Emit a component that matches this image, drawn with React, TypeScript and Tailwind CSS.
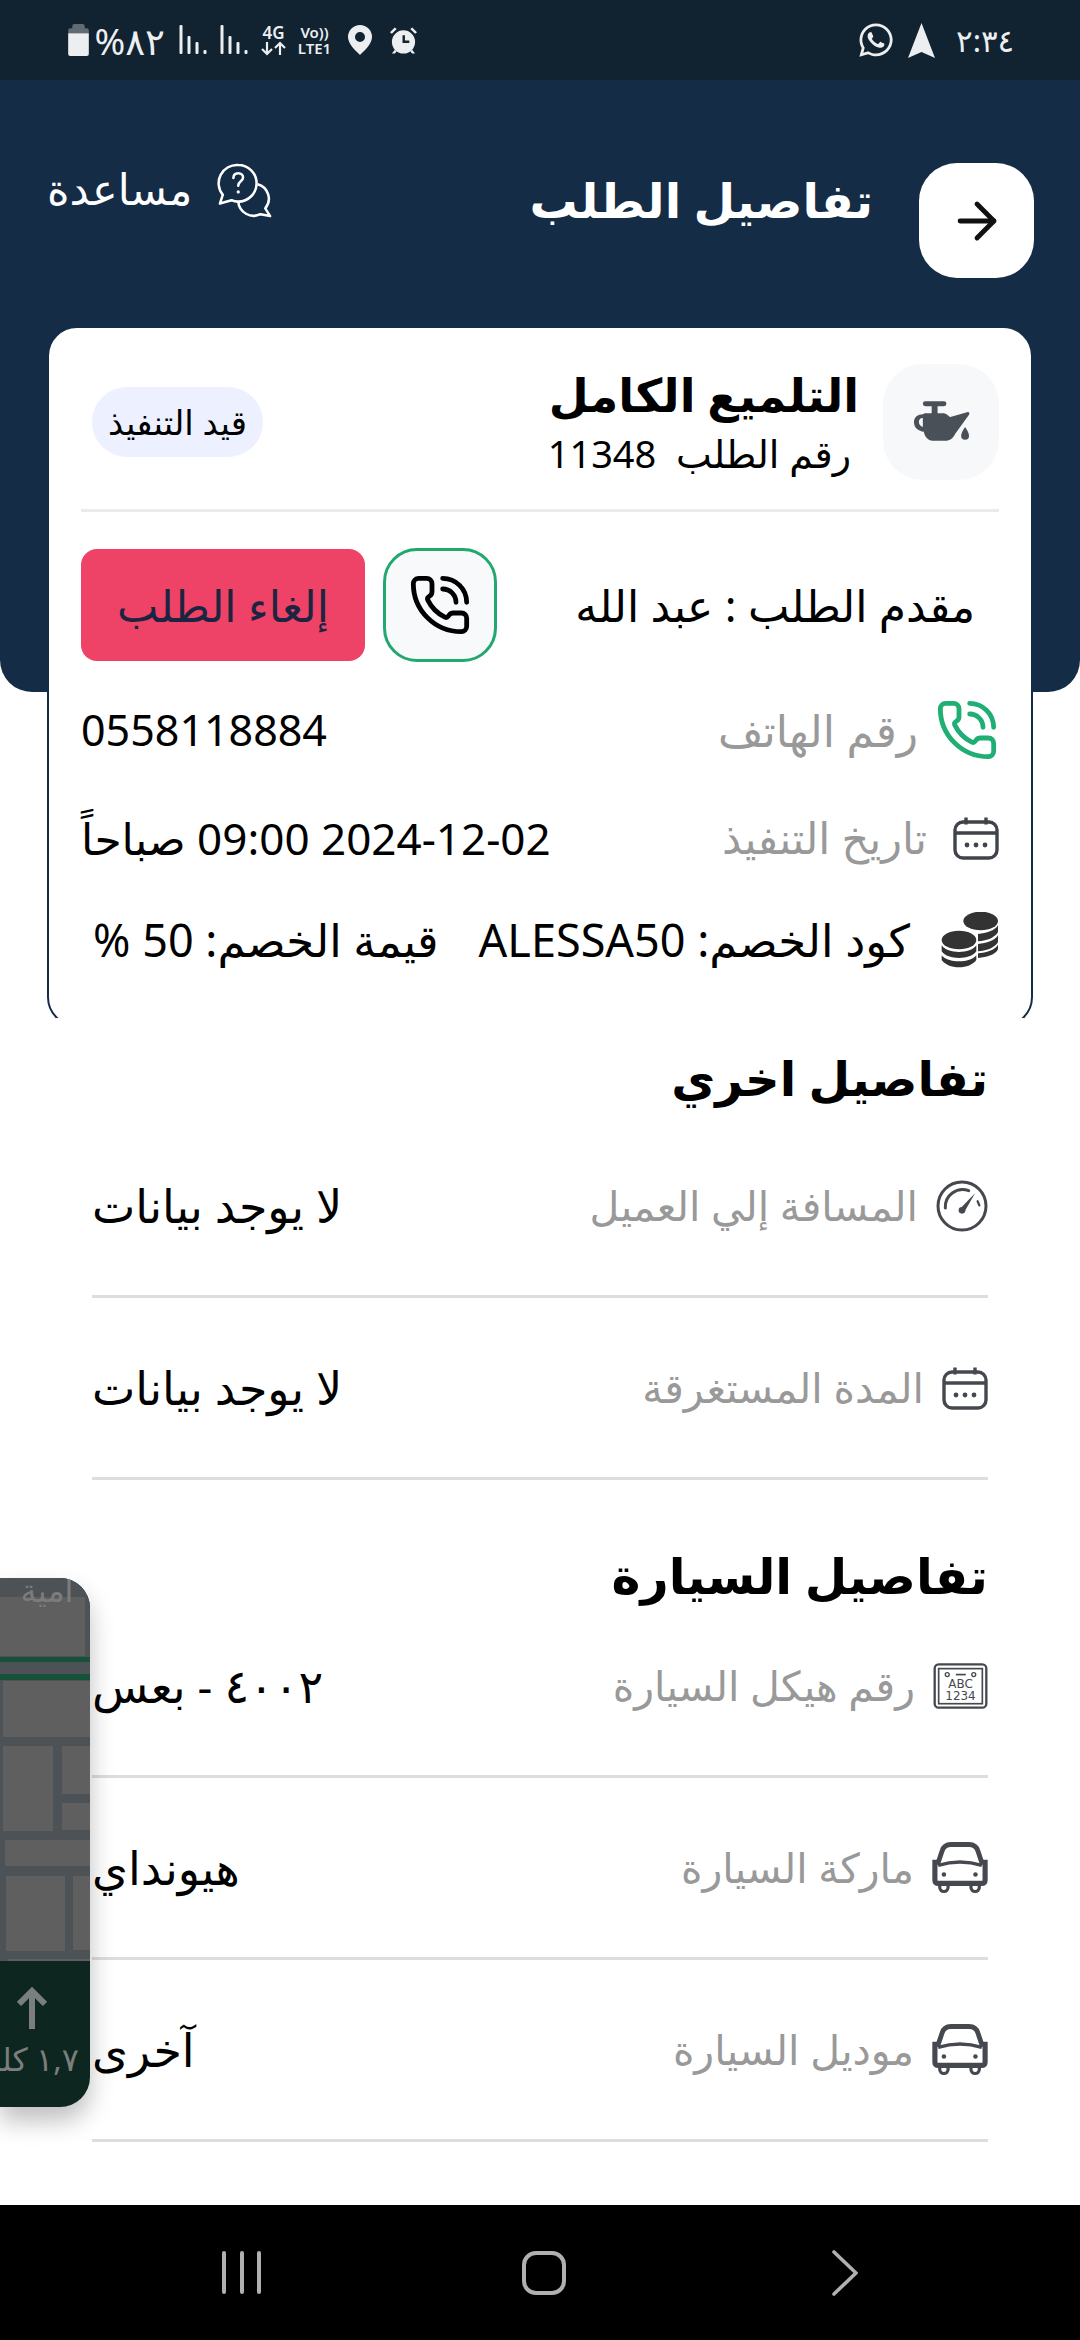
import { ArrowRight, PhoneCall } from "lucide-react";
import { FaWhatsapp } from "react-icons/fa";

function CalendarIcon({ className }: { className?: string }) {
  return (
    <svg viewBox="0 0 46 44" className={className} fill="none" stroke="currentColor" strokeWidth="3.4">
      <rect x="2" y="6" width="42" height="36" rx="8" />
      <path d="M2 17h42M13 1.5v7M33 1.5v7" />
      <circle cx="14" cy="29" r="2.4" fill="currentColor" stroke="none" />
      <circle cx="23" cy="29" r="2.4" fill="currentColor" stroke="none" />
      <circle cx="32" cy="29" r="2.4" fill="currentColor" stroke="none" />
    </svg>
  );
}

function CoinsIcon({ className }: { className?: string }) {
  return (
    <svg viewBox="38 38 170 168" className={className} fill="currentColor">
      <ellipse cx="155" cy="65" rx="52" ry="28" />
      <path d="M147 104c26-2 50-10 60-26v20c-8 16-32 26-60 28z" />
      <path d="M147 134c26-2 50-10 60-26v20c-8 16-32 26-60 28z" />
      <path d="M147 162c26-2 50-10 60-26v14c-8 16-32 24-60 26z" />
      <ellipse cx="90" cy="122" rx="52" ry="28" />
      <path d="M38 138c10 14 30 20 52 20s42-6 52-20v18c-10 14-30 20-52 20s-42-6-52-20z" />
      <path d="M38 168c10 12 30 18 52 18s42-6 52-18v14c-10 14-30 22-52 22s-42-8-52-22z" />
    </svg>
  );
}

function GaugeIcon({ className }: { className?: string }) {
  return (
    <svg viewBox="40 36 156 156" className={className} fill="none" stroke="currentColor" strokeWidth="9">
      <circle cx="118" cy="114" r="72" />
      <path d="M68 120a52 52 0 0 1 70-52" strokeLinecap="round" />
      <path d="M112 122l45-46-32 56z" fill="currentColor" stroke="none" />
      <circle cx="118" cy="127" r="10" fill="currentColor" stroke="none" />
      <path d="M165 100l5 12" strokeWidth="7" strokeLinecap="round" />
    </svg>
  );
}

function PlateIcon({ className }: { className?: string }) {
  return (
    <svg viewBox="36 43 164 139" className={className} fill="none" stroke="currentColor">
      <rect x="40" y="47" width="156" height="131" rx="12" strokeWidth="7" />
      <rect x="52" y="60" width="132" height="106" strokeWidth="5" />
      <circle cx="78" cy="78" r="6" strokeWidth="4" />
      <circle cx="158" cy="78" r="6" strokeWidth="4" />
      <path d="M104 78h30" strokeWidth="5" />
      <text x="118" y="118" textAnchor="middle" fontSize="36" fill="currentColor" stroke="none" fontFamily="DejaVu Sans">ABC</text>
      <text x="118" y="154" textAnchor="middle" fontSize="36" fill="currentColor" stroke="none" fontFamily="DejaVu Sans">1234</text>
    </svg>
  );
}

function CarIcon({ className }: { className?: string }) {
  return (
    <svg viewBox="33 38 174 160" className={className} fill="none" stroke="currentColor" strokeWidth="15" strokeLinejoin="round">
      <path d="M50 108l14-42c4-14 14-21 28-21h56c14 0 24 7 28 21l14 42" />
      <path d="M52 110c44-14 92-14 136 0" strokeWidth="11" />
      <path d="M42 92v64c0 6 4 10 10 10h136c6 0 10-4 10-10V92" strokeWidth="16" />
      <circle cx="70" cy="138" r="7" fill="currentColor" stroke="none" />
      <circle cx="168" cy="138" r="7" fill="currentColor" stroke="none" />
      <path d="M57 168v10a13 13 0 0 0 26 0v-10M154 168v10a13 13 0 0 0 26 0v-10" strokeWidth="10" />
    </svg>
  );
}

function OilCanIcon({ className }: { className?: string }) {
  return (
    <svg viewBox="0 0 58 42" className={className} fill="currentColor">
      <rect x="10" y="0" width="24" height="5" rx="2.5" />
      <rect x="19" y="4" width="6" height="9" />
      <path d="M12 12h18c4 0 5 2 8 4l17-5c2-.5 3 1 2 2.500L43 33c-2 4-5 7-9 7H20c-5 0-8-4-9-9-5-1-10-3-10-10 0-5 4-8 9-8zm-2 5c-3 0-4 2-4 4 0 3 2 4 4 5z" fillRule="evenodd" />
      <path d="M53 26c2 3 4 6 4 9a4 4 0 0 1-8 0c0-3 2-6 4-9z" />
    </svg>
  );
}

function HelpChatIcon({ className }: { className?: string }) {
  return (
    <svg viewBox="0 0 56 58" className={className} fill="none" stroke="currentColor" strokeWidth="2.6" strokeLinejoin="round">
      <path d="M21 2a19 19 0 0 1 0 38c-3 0-5-.5-7-1.500L2 42l3-9A19 19 0 0 1 21 2z" />
      <path d="M41 22a15.500 15.500 0 0 1 8 25l5 8-10-2a16 16 0 0 1-23-13" />
      <path d="M16 15.500c0-3 2-5 5-5s5 2 5 4.500c0 4-5 4-5 8.500" strokeLinecap="round" />
      <circle cx="21" cy="30" r="1.700" fill="currentColor" stroke="none" />
    </svg>
  );
}

function SignalIcon() {
  return (
    <svg viewBox="0 0 27 30" className="h-[30px] w-[28px]" fill="#eceef0">
      <rect x="0" y="0" width="3" height="29" rx="1" />
      <rect x="8" y="11" width="3" height="18" rx="1" />
      <rect x="16" y="17" width="3" height="12" rx="1" />
      <rect x="24" y="25" width="3" height="4" rx="1" />
    </svg>
  );
}

function StatusBar() {
  return (
    <div dir="ltr" className="flex h-[80px] shrink-0 items-center justify-between bg-[#112230] pl-[68px] pr-[69px] text-[#eceef0]">
      <div className="flex items-center">
        <svg viewBox="0 0 20 31" className="h-[32px] w-[21px]">
          <path d="M6 0h8a2 2 0 0 1 2 2v2h2a2 2 0 0 1 2 2v3H0V6a2 2 0 0 1 2-2h2V2a2 2 0 0 1 2-2z" fill="#5f6b75" />
          <path d="M0 9h20v20a2 2 0 0 1-2 2H2a2 2 0 0 1-2-2z" fill="#eceef0" />
        </svg>
        <span dir="rtl" className="ml-[7px] w-[69px] whitespace-nowrap text-[37px] leading-none">٨٢%</span>
        <div className="ml-[14px]"><SignalIcon /></div>
        <div className="ml-[13px]"><SignalIcon /></div>
        <div className="ml-[13px] flex w-[25px] flex-col items-center">
          <span className="text-[17px] font-semibold leading-[17px]">4G</span>
          <svg viewBox="0 0 25 15" className="h-[15px] w-[25px]" fill="none" stroke="currentColor" strokeWidth="2.2">
            <path d="M6 1v12M1 8l5 5 5-5M19 14V2M14 7l5-5 5 5" />
          </svg>
        </div>
        <div className="ml-[9px] flex w-[39px] flex-col items-center text-[15px] font-semibold leading-[16px]">
          <span>Vo))</span>
          <span>LTE1</span>
        </div>
        <svg viewBox="0 0 24 30" className="ml-[14px] h-[30px] w-[24px]" fill="#eceef0">
          <path d="M12 0a12 12 0 0 1 12 12c0 7-8 14-12 18C8 26 0 19 0 12A12 12 0 0 1 12 0zm0 7a5 5 0 1 0 0 10 5 5 0 0 0 0-10z" fillRule="evenodd" />
        </svg>
        <svg viewBox="0 0 30 30" className="ml-[17px] h-[30px] w-[29px]" fill="#eceef0">
          <path d="M15 5a12 12 0 1 1 0 24 12 12 0 0 1 0-24zm-1 5v8h7v-2.500h-4.500V10z" fillRule="evenodd" />
          <path d="M1 7l5-5 2 1.500-5 5zM29 7l-5-5-2 1.500 5 5zM6 25l-3 4h3l2-2zM24 25l3 4h-3l-2-2z" />
        </svg>
      </div>
      <div className="flex items-center">
        <FaWhatsapp className="h-[38px] w-[38px]" />
        <svg viewBox="0 0 27 35" className="ml-[13px] h-[35px] w-[27px]" fill="#eceef0">
          <path d="M13.500 0L27 35l-13.500-6L0 35z" />
        </svg>
        <span className="ml-[21px] w-[55px] whitespace-nowrap text-[31px] leading-none">٢:٣٤</span>
      </div>
    </div>
  );
}

function Header() {
  return (
    <div className="flex h-[612px] shrink-0 items-start justify-between rounded-b-[32px] bg-[#152c47] pl-[47px] pr-[46px] pt-[83px]">
      <div className="flex items-start">
        <button className="flex h-[115px] w-[115px] items-center justify-center rounded-[38px] bg-white text-[#111]">
          <ArrowRight className="h-[58px] w-[58px]" strokeWidth={2} />
        </button>
        <h1 className="mr-[46px] mt-[8px] text-[48px] font-bold leading-[58px] text-white">تفاصيل الطلب</h1>
      </div>
      <div className="flex items-center gap-[25px] text-white">
        <HelpChatIcon className="h-[56px] w-[56px]" />
        <span className="mb-[4px] text-[43px] leading-[52px]">مساعدة</span>
      </div>
    </div>
  );
}

function OrderCard() {
  return (
    <div className="relative z-10 mx-[47px] -mt-[366px] h-[692px] shrink-0 overflow-hidden">
      <div className="h-[701px] rounded-[30px] border-2 border-[#152c47] bg-white px-[32px] pt-[36px]">
        <div className="flex h-[116px] items-center justify-between">
          <div className="flex items-center">
            <div className="flex h-[116px] w-[116px] items-center justify-center rounded-[40px] bg-[#f7f8fa] text-[#4a5058]">
              <OilCanIcon className="h-[42px] w-[57px]" />
            </div>
            <div className="mr-[24px] mt-[6px]">
              <div className="text-[46px] font-bold leading-[56px] text-black">التلميع الكامل</div>
              <div className="mr-[8px] text-[38px] leading-[62px] text-black">رقم الطلب&nbsp; 11348</div>
            </div>
          </div>
          <span className="ml-[11px] flex h-[70px] w-[171px] items-center justify-center whitespace-nowrap rounded-full bg-[#edf0fe] text-[34px] text-black">قيد التنفيذ</span>
        </div>
        <div className="mt-[29px] h-[3px] bg-[#ebebeb]" />
        <div className="mt-[36px] flex items-center justify-between">
          <span className="mr-[24px] text-[44px] text-black">مقدم الطلب : عبد الله</span>
          <div className="flex items-center gap-[18px]">
            <button className="flex h-[114px] w-[114px] items-center justify-center rounded-[34px] border-[3px] border-[#22a86f] bg-[#f7f9fb] text-black">
              <PhoneCall className="h-[64px] w-[64px]" strokeWidth={1.8} />
            </button>
            <button className="flex h-[112px] w-[284px] items-center justify-center rounded-[16px] bg-[#ee4266] text-[44px] text-[#1b2440]">إلغاء الطلب</button>
          </div>
        </div>
        <div className="mt-[37px] flex h-[62px] items-center justify-between">
          <div className="flex items-center gap-[17px]">
            <PhoneCall className="h-[64px] w-[64px] text-[#1fae73]" strokeWidth={1.8} />
            <span className="text-[44px] text-[#999999]">رقم الهاتف</span>
          </div>
          <span className="text-[43px] text-black">0558118884</span>
        </div>
        <div className="mt-[46px] flex h-[62px] items-center justify-between">
          <div className="flex items-center gap-[26px]">
            <CalendarIcon className="h-[44px] w-[46px] text-[#3f444b]" />
            <span className="text-[43px] text-[#999999]">تاريخ التنفيذ</span>
          </div>
          <span className="whitespace-nowrap text-[44px] text-black">2024-12-02 09:00 صباحاً</span>
        </div>
        <div className="mt-[40px] flex h-[62px] items-center">
          <CoinsIcon className="h-[56px] w-[58px] text-[#333333]" />
          <span className="mr-[31px] whitespace-nowrap text-[45px] text-black">كود الخصم: ALESSA50</span>
          <span className="mr-[40px] whitespace-nowrap text-[45px] text-black">قيمة الخصم: 50 %</span>
        </div>
      </div>
    </div>
  );
}

function DetailRow({ icon, label, value }: { icon: React.ReactNode; label: string; value: string }) {
  return (
    <div className="flex h-[182px] items-center justify-between border-b-[3px] border-[#dddddd]">
      <div className="flex items-center gap-[18px] text-[#45494f]">
        {icon}
        <span className="text-[41px] text-[#999999]">{label}</span>
      </div>
      <span className="text-[46px] text-black">{value}</span>
    </div>
  );
}

function Details() {
  return (
    <div className="px-[92px] pt-[39px]">
      <h2 className="mb-[17px] text-[48px] font-bold leading-[42px] text-black">تفاصيل اخري</h2>
      <DetailRow icon={<GaugeIcon className="h-[52px] w-[52px]" />} label="المسافة إلي العميل" value="لا يوجد بيانات" />
      <DetailRow icon={<CalendarIcon className="h-[44px] w-[46px]" />} label="المدة المستغرقة" value="لا يوجد بيانات" />
      <h2 className="mt-[74px] text-[49px] font-bold leading-[42px] text-black">تفاصيل السيارة</h2>
      <DetailRow icon={<PlateIcon className="h-[46px] w-[55px]" />} label="رقم هيكل السيارة" value="٤٠٠٢ - بعس" />
      <DetailRow icon={<CarIcon className="h-[52px] w-[56px]" />} label="ماركة السيارة" value="هيونداي" />
      <DetailRow icon={<CarIcon className="h-[52px] w-[56px]" />} label="موديل السيارة" value="آخرى" />
    </div>
  );
}

function MapPip() {
  return (
    <div className="absolute left-0 top-[1578px] z-20 h-[529px] w-[90px] overflow-hidden rounded-r-[30px] bg-[#0d2620] shadow-[0_14px_24px_rgba(0,0,0,0.25)]">
      <svg viewBox="0 0 90 383" className="h-[383px] w-[90px]">
        <rect width="90" height="383" fill="#4d5257" />
        <g fill="#5f5f5f">
          <rect x="0" y="19" width="85" height="59" />
          <rect x="3" y="103" width="87" height="56" />
          <rect x="3" y="168" width="50" height="85" />
          <rect x="62" y="168" width="28" height="48" />
          <rect x="62" y="225" width="28" height="27" />
          <rect x="5" y="262" width="85" height="26" />
          <rect x="6" y="298" width="59" height="75" />
          <rect x="73" y="298" width="17" height="74" />
          <rect x="8" y="381" width="82" height="2" />
        </g>
        <rect x="0" y="79" width="90" height="5" fill="#155239" />
        <rect x="0" y="96" width="90" height="6" fill="#155239" />
        <text x="47" y="24" textAnchor="middle" fontSize="32" fill="#7c7c7c" fontFamily="Noto Sans, DejaVu Sans, sans-serif">امية</text>
      </svg>
      <div className="flex flex-col text-[#7a7f7d]">
        <svg viewBox="0 0 30 42" className="ml-[17px] mt-[26px] h-[42px] w-[30px] self-end" fill="none" stroke="currentColor" strokeWidth="6">
          <path d="M15 42V4M2 17L15 4l13 13" />
        </svg>
        <span className="mt-[10px] whitespace-nowrap pr-[11px] text-[32px] leading-[40px]">١,٧ كلم</span>
      </div>
    </div>
  );
}

function NavBar() {
  return (
    <div className="flex h-[135px] shrink-0 items-center justify-center bg-black text-[#b0b0b0]">
      <div className="flex w-[636px] items-center justify-between" dir="ltr">
        <div className="flex gap-[13.500px]">
          <span className="h-[43px] w-[4px] rounded-full bg-[#b0b0b0]" />
          <span className="h-[43px] w-[4px] rounded-full bg-[#b0b0b0]" />
          <span className="h-[43px] w-[4px] rounded-full bg-[#b0b0b0]" />
        </div>
        <span className="mr-[6px] h-[44px] w-[44px] rounded-[14px] border-[4px] border-[#b0b0b0]" />
        <svg viewBox="0 0 26 46" className="h-[46px] w-[26px]" fill="none" stroke="currentColor" strokeWidth="3.6" strokeLinecap="round">
          <path d="M2 2l22 21L2 44" />
        </svg>
      </div>
    </div>
  );
}

export default function App() {
  return (
    <div dir="rtl" className="relative flex h-[2340px] w-[1080px] flex-col overflow-hidden bg-white font-['Noto_Sans','DejaVu_Sans',sans-serif]">
      <StatusBar />
      <Header />
      <OrderCard />
      <div className="flex-1">
        <Details />
      </div>
      <MapPip />
      <NavBar />
    </div>
  );
}
